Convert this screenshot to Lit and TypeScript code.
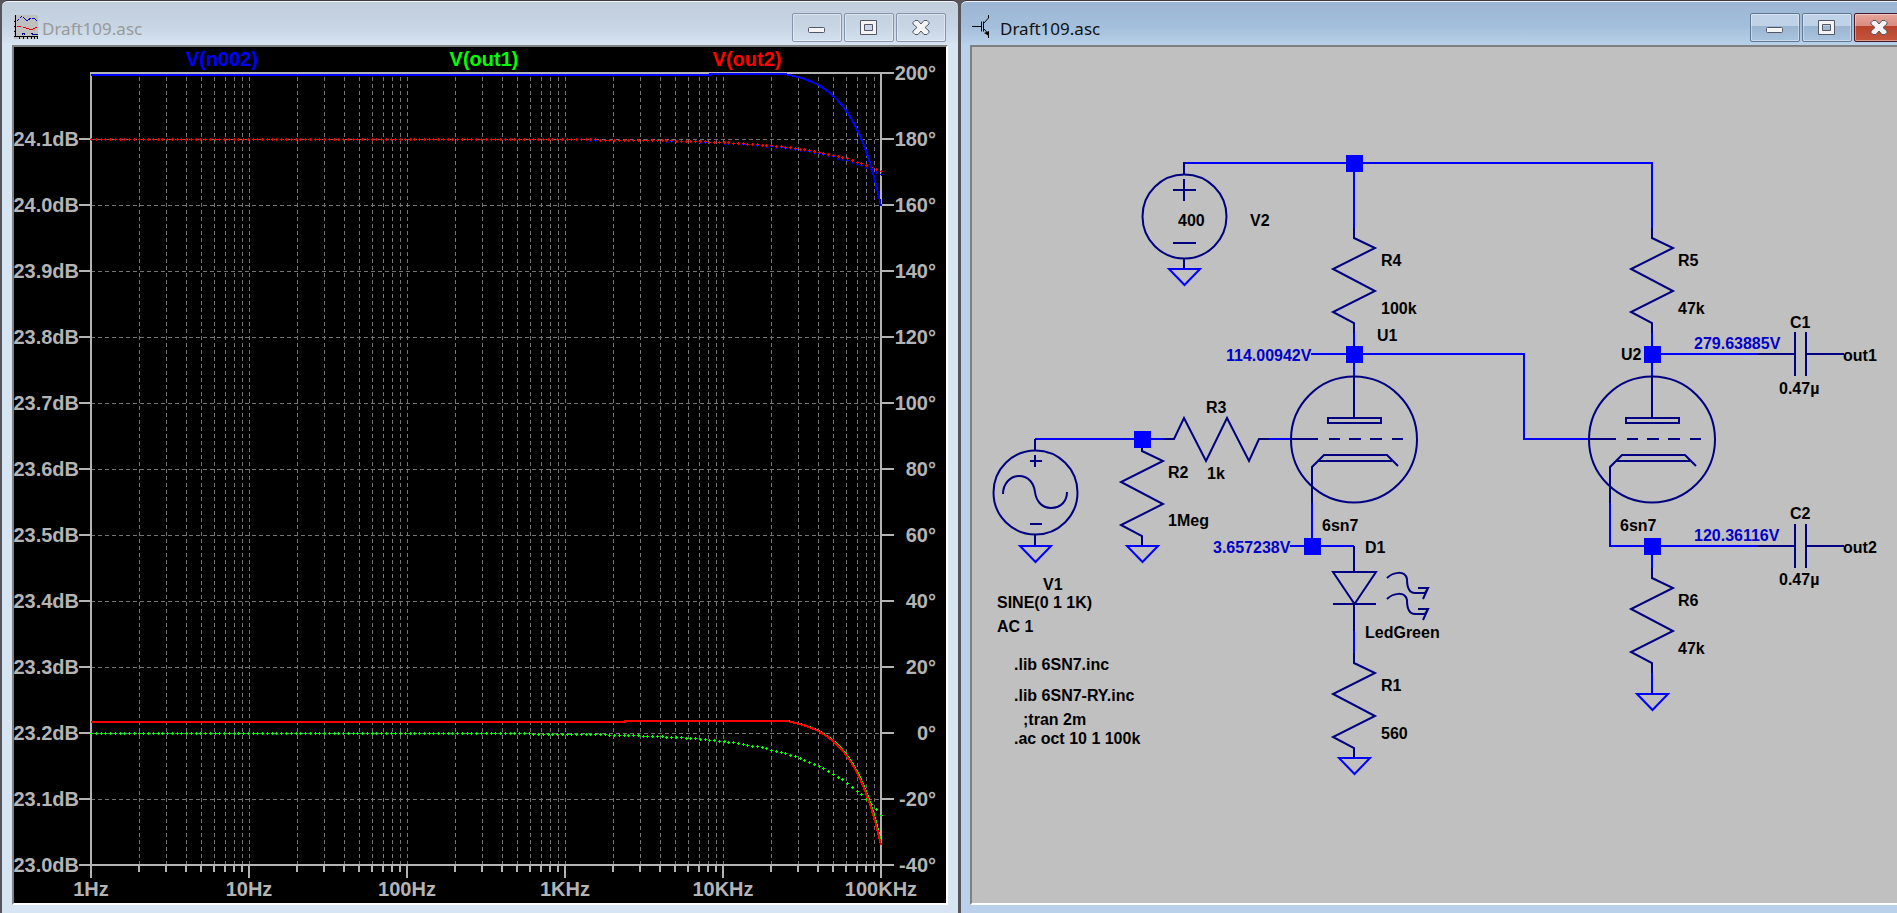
import { LitElement, html, svg, css } from "lit";
import { customElement, property } from "lit/decorators.js";

type Point = [number, number];

/* ---------- caption button glyphs ---------- */

const minimiseGlyph = html`<svg width="20" height="18" viewBox="0 0 20 18" aria-hidden="true">
  <rect x="1.500" y="8.500" width="16" height="5" rx="1" fill="#f4f4f4" stroke="#535666" />
</svg>`;

const maximiseGlyph = html`<svg width="20" height="18" viewBox="0 0 20 18" aria-hidden="true">
  <path fill-rule="evenodd" fill="#f4f4f4" stroke="#535666"
    d="M1.500 1.500H17.500V15.500H1.500ZM5.500 5.500V11.500H13.500V5.500Z" />
</svg>`;

const closeGlyph = html`<svg width="20" height="18" viewBox="0 0 20 18" aria-hidden="true">
  <path fill="#f4f4f4" stroke="#535666" stroke-linejoin="round"
    d="M2 3.500L4 1.500H7L10 5L13 1.500H16L18 3.500V5L14 8.500L18 12V13.500L16 15.500H13L10 12L7 15.500H4L2 13.500V12L6 8.500L2 5Z" />
</svg>`;

const plotIcon = html`<svg width="24" height="24" viewBox="0 0 24 24" aria-hidden="true" shape-rendering="crispEdges">
  <rect width="24" height="24" fill="#c0c0c0" />
  <path d="M1.500 0V22M0 21.500H24M0 6.500H1M0 11.500H1M0 16.500H1M5.500 22V24M9.500 22V24M13.500 22V24M17.500 22V24M20.500 22V24M23.500 22V24"
    fill="none" stroke="#000" />
  <path d="M3 6L8 1L13 6L17 3H20L24 7" fill="none" stroke="#0000c8" stroke-dasharray="3 1" />
  <path d="M3 11.500H7M9 12.500H12M12 13.500H15M15 14.500H19M19 13.500H21M21 12.500H23" fill="none" stroke="#f00" />
  <path d="M8.500 20V18.500H10.500V20M17 18.500H18.500V19.500H24" fill="none" stroke="#000080" />
</svg>`;

const schematicIcon = html`<svg width="20" height="24" viewBox="0 0 20 24" aria-hidden="true">
  <path d="M0 11.500H9M9.500 6.500V16.500M11.500 6.500V16.500M12 8L16.500 3V0M12 14L16.500 19V23" fill="none" stroke="#000" />
  <path d="M17 16V21L12 18Z" fill="#000" />
</svg>`;

/* ---------- framed desktop window ---------- */

@customElement("mdi-window")
export class MdiWindow extends LitElement {
  @property() heading = "";
  @property({ type: Boolean, reflect: true }) active = false;

  static styles = css`
    :host {
      --top: #c1cddb;
      --mid: #c7d5e4;
      --body: #d7e4f2;
      --caption: #999;
      --edge: #8593ab;
      --face: transparent;
      display: flex;
      flex-direction: column;
      box-sizing: border-box;
      padding: 0 10px 8px;
      border-top: 1px solid #3c3a40;
      border-radius: 6px 6px 0 0;
      box-shadow: inset 0 1px #f2f6fa;
      background: linear-gradient(var(--top) 1px, var(--mid) 26px, var(--body) 44px);
      font-family: "Noto Sans", "Open Sans", sans-serif;
    }
    :host([active]) {
      --top: #9bb5d2;
      --mid: #a4bfdb;
      --body: #b9d1ea;
      --caption: #111;
      --edge: #5f7792;
      --face: linear-gradient(#bfd2e8 43%, #9bb4cf 43%, #a9c4df);
    }
    header {
      display: flex;
      align-items: flex-start;
      height: 44px;
      flex: none;
    }
    .icon {
      display: flex;
      margin-top: 14px;
      min-width: 24px;
      padding-left: 2px;
    }
    h1 {
      flex: 1;
      margin: 14px 0 0 4px;
      font-size: 17px;
      line-height: 27px;
      font-weight: 400;
      color: var(--caption);
    }
    .buttons {
      display: flex;
      gap: 2px;
      margin: 12px 2px 0 0;
    }
    button {
      display: flex;
      align-items: center;
      justify-content: center;
      width: 50px;
      height: 29px;
      padding: 0;
      border: 1px solid var(--edge);
      border-radius: 2px;
      box-shadow: inset 0 0 0 1px rgb(255 255 255 / 40%);
      background: var(--face);
    }
    :host([active]) .close {
      border-color: #43192a;
      background: linear-gradient(#e5a59b, #da8d80 43%, #b7412b 43%, #c4563c);
    }
    .client {
      flex: 1;
      min-height: 0;
      display: grid;
      grid-template: minmax(0, 1fr) / minmax(0, 1fr);
      border: 2px solid #808080;
      border-right-color: #fff;
      border-bottom-color: #fff;
    }
  `;

  render() {
    return html`
      <header>
        <span class="icon"><slot name="icon"></slot></span>
        <h1>${this.heading}</h1>
        <div class="buttons">
          <button aria-label="Minimize">${minimiseGlyph}</button>
          <button aria-label="Maximize">${maximiseGlyph}</button>
          <button class="close" aria-label="Close">${closeGlyph}</button>
        </div>
      </header>
      <div class="client"><slot></slot></div>
    `;
  }
}

/* ---------- frequency response plot ---------- */

const LEFT = 91;
const TOP = 73;
const DECADE = 158;
const ROW = 66;
const RIGHT = LEFT + 5 * DECADE;
const BOTTOM = TOP + 12 * ROW;

const xOf = (hz: number) => LEFT + DECADE * Math.log10(hz);

@customElement("bode-plot")
export class BodePlot extends LitElement {
  static styles = css`
    :host {
      display: block;
      background: #000;
    }
    svg {
      display: block;
      width: 100%;
      height: 100%;
      font: bold 20px "Liberation Sans", Arial, sans-serif;
    }
    .grid {
      stroke: #747474;
      stroke-width: 1;
      stroke-dasharray: 4 3;
      fill: none;
    }
    .axis {
      stroke: #b4b4b4;
      stroke-width: 2;
      fill: none;
    }
    .label {
      fill: #b4b4b4;
    }
    .end {
      text-anchor: end;
    }
    .mid {
      text-anchor: middle;
    }
    .trace {
      fill: none;
      stroke-width: 2;
    }
  `;

  private minorX(): number[] {
    const xs: number[] = [];
    for (let d = 0; d < 5; d++) {
      for (let m = 2; m < 10; m++) xs.push(Math.round(xOf(m * 10 ** d)));
    }
    return xs;
  }

  private magnitude(flat: number, peak: number, step: number, fall: number) {
    const pts: Point[] = [[LEFT, flat], [step, flat], [step, peak]];
    for (let x = 761; x <= RIGHT; x += 3) {
      const ratio = 10 ** ((x - RIGHT) / DECADE);
      pts.push([x, peak + Math.max(0, fall * ratio ** 2.4 - 6 * (1 - ratio))]);
    }
    return pts.map((p) => p.join()).join(" ");
  }

  /* One plus-shaped marker for each of the ten points per octave. */
  private phase(base: number, fall: number) {
    let d = "";
    for (let i = 0; i <= 166; i++) {
      const x = Math.round(LEFT + (i * DECADE) / 33.22);
      const y = Math.round(base + fall * 10 ** ((x - RIGHT) / DECADE));
      d += `M${x - 1} ${y + 0.5}h3M${x + 0.5} ${y - 1}v3`;
    }
    return d;
  }

  render() {
    const minor = this.minorX();
    const decades = [0, 1, 2, 3, 4, 5].map((d) => LEFT + d * DECADE);
    const rows = Array.from({ length: 13 }, (_, i) => TOP + i * ROW);
    const names = ["1Hz", "10Hz", "100Hz", "1KHz", "10KHz", "100KHz"];
    const gridPath =
      [...minor, ...decades.slice(1, 5)].map((x) => `M${x + 0.5} ${TOP + 4}V${BOTTOM}`).join("") +
      rows.slice(1, 12).map((y) => `M${LEFT} ${y + 0.5}H${RIGHT}`).join("");
    const ticks =
      minor.map((x) => `M${x} ${BOTTOM}v7`).join("") +
      decades.map((x) => `M${x} ${BOTTOM}v13`).join("") +
      rows.map((y, i) => (i ? `M79 ${y}H${LEFT}` : "") + `M${RIGHT} ${y}h13`).join("");

    return html`<svg viewBox="14 47 932 856" preserveAspectRatio="xMinYMin meet" role="img" aria-label="AC analysis">
      <path class="grid" shape-rendering="crispEdges" d=${gridPath} />
      <rect class="axis" x=${LEFT} y=${TOP} width=${RIGHT - LEFT} height=${BOTTOM - TOP} />
      <path class="axis" d=${ticks} />
      ${rows.map((y, i) => svg`
        ${i ? svg`<text class="label end" x="79" y=${y + 7}>${(24.2 - i / 10).toFixed(1)}dB</text>` : ""}
        <text class="label end" x="936" y=${y + 7}>${200 - i * 20}°</text>`)}
      ${decades.map((x, i) => svg`<text class="label mid" x=${x} y="896">${names[i]}</text>`)}
      <text class="mid" x="222" y="66" fill="#00f">V(n002)</text>
      <text class="mid" x="484" y="66" fill="#0f0">V(out1)</text>
      <text class="mid" x="747" y="66" fill="#f00">V(out2)</text>
      <g shape-rendering="crispEdges">
        <path d=${this.phase(139, 35)} stroke="#00f" />
        <path d=${this.phase(139, 32)} stroke="#f00" />
        <path d=${this.phase(733, 82)} stroke="#0f0" />
        <polyline class="trace" stroke="#00f" points=${this.magnitude(75, 74, 710, 132)} />
        <polyline class="trace" stroke="#0f0" points=${this.magnitude(722, 721, 625, 121)} />
        <polyline class="trace" stroke="#f00" points=${this.magnitude(722, 721, 625, 124)} />
      </g>
    </svg>`;
  }
}

/* ---------- circuit schematic ---------- */

const resistor = (x: number, y: number) => svg`<path class="part"
  d="M${x} ${y}v10l21 10l-42 21l42 22l-42 21l21 11v10" />`;

const ground = (x: number, y: number) => svg`<path class="wire" d="M${x - 15} ${y}h31l-15.500 16z" />`;

const junction = (x: number, y: number) => svg`<rect class="node" x=${x - 8} y=${y - 8} width="17" height="17" />`;

const capacitor = (y: number) => svg`<path class="part"
  d="M1758 ${y}H1795M1806 ${y}H1844M1795 ${y - 22}v44M1806 ${y - 22}v44" />`;

const triode = (x: number) => svg`
  <circle class="part" cx=${x} cy="439.500" r="63" />
  <path class="part" d="M${x} 377V418M${x - 26} 418h53v5h-53zM${x - 63} 439h27M${x - 25} 439h11M${x - 5} 439h12M${x + 16} 439h12M${x + 38} 439h11
    M${x - 42} 503V467l12 -12h63l11 11M${x - 36} 461h74" />`;

const led = (y: number) => svg`<path class="part"
  d="M1387 ${y + 6}C1393 ${y} 1405 ${y - 2} 1407 ${y + 7}C1407 ${y + 15} 1409 ${y + 21} 1415 ${y + 21}H1425L1428 ${y + 16}H1418M1428 ${y + 16}L1423 ${y + 27}" />`;

const captions: [number, number, string][] = [
  [1178, 226, "400"], [1250, 226, "V2"],
  [1381, 266, "R4"], [1381, 314, "100k"], [1377, 341, "U1"],
  [1678, 266, "R5"], [1678, 314, "47k"], [1621, 360, "U2"],
  [1790, 328, "C1"], [1779, 394, "0.47µ"], [1843, 361, "out1"],
  [1790, 519, "C2"], [1779, 585, "0.47µ"], [1843, 553, "out2"],
  [1206, 413, "R3"], [1207, 479, "1k"],
  [1168, 478, "R2"], [1168, 526, "1Meg"],
  [1322, 531, "6sn7"], [1620, 531, "6sn7"],
  [1365, 553, "D1"], [1365, 638, "LedGreen"],
  [1381, 691, "R1"], [1381, 739, "560"],
  [1678, 606, "R6"], [1678, 654, "47k"],
  [1043, 590, "V1"], [997, 608, "SINE(0 1 1K)"], [997, 632, "AC 1"],
  [1014, 670, ".lib 6SN7.inc"], [1014, 701, ".lib 6SN7-RY.inc"],
  [1023, 725, ";tran 2m"], [1014, 744, ".ac oct 10 1 100k"],
];

const voltages: [number, number, string][] = [
  [1226, 361, "114.00942V"], [1213, 553, "3.657238V"],
  [1694, 349, "279.63885V"], [1694, 541, "120.36116V"],
];

@customElement("circuit-schematic")
export class CircuitSchematic extends LitElement {
  static styles = css`
    :host {
      display: block;
      overflow: hidden;
      background: #c0c0c0;
    }
    svg {
      display: block;
      width: 100%;
      height: 100%;
      font: bold 16px "Liberation Sans", Arial, sans-serif;
    }
    .wire {
      fill: none;
      stroke: #00f;
      stroke-width: 2;
    }
    .part {
      fill: none;
      stroke: #000080;
      stroke-width: 2;
    }
    .node {
      fill: #00f;
    }
    .voltage {
      fill: #0000c8;
    }
  `;

  render() {
    return html`<svg role="img" aria-label="Circuit schematic">
      <g transform="translate(-972 -47)">
        <path class="wire" d="M1184 163H1652V228M1354 163V228M1354 333V377M1311 354H1524V439H1590
          M1652 333V377M1652 354H1758M1610 503V546H1758M1652 546V568M1652 673V694
          M1035 439H1164M1269 439H1291M1312 503V546M1290 546H1354M1354 631V653" />
        <circle class="part" cx="1184.500" cy="216.500" r="42" />
        <path class="part" d="M1184 162V174M1184 259V269M1173 190h23M1184 179v22M1173 243h23" />
        <circle class="part" cx="1035.500" cy="492.500" r="42" />
        <path class="part" d="M1035 439V450M1035 535V546M1030 461h12M1035 455v12M1030 524h12
          M1003 494C1003 484 1010 476 1019 476C1029 476 1034 484 1035 492C1036 500 1041 508 1051 508C1062 508 1067 500 1067 492" />
        ${resistor(1354, 228)} ${resistor(1652, 228)} ${resistor(1142, 441)}
        ${resistor(1354, 653)} ${resistor(1652, 568)}
        <path class="part" d="M1164 439h10l10 -21l22 43l21 -43l22 43l10 -22h10" />
        ${triode(1354)} ${triode(1652)}
        ${capacitor(354)} ${capacitor(546)}
        <path class="part" d="M1354 546V572M1333 572h43l-21.500 32zM1333 604h43M1354 604V631" />
        ${led(572)} ${led(593)}
        ${ground(1184, 269)} ${ground(1035, 546)} ${ground(1142, 546)}
        ${ground(1354, 758)} ${ground(1652, 694)}
        ${junction(1354, 163)} ${junction(1354, 354)} ${junction(1652, 354)}
        ${junction(1142, 439)} ${junction(1312, 546)} ${junction(1652, 546)}
        ${captions.map(([x, y, t]) => svg`<text x=${x} y=${y}>${t}</text>`)}
        ${voltages.map(([x, y, t]) => svg`<text class="voltage" x=${x} y=${y}>${t}</text>`)}
      </g>
    </svg>`;
  }
}

/* ---------- desktop with the two tiled windows ---------- */

@customElement("app-root")
export class AppRoot extends LitElement {
  static styles = css`
    :host {
      display: grid;
      grid-template: minmax(0, 1fr) / minmax(0, 960fr) minmax(0, 937fr);
      height: 100vh;
      overflow: hidden;
      background: #55555b;
    }
    .pane {
      display: grid;
      grid-template: minmax(0, 1fr) / minmax(0, 1fr);
    }
    .left {
      padding: 0 2px;
    }
    .right {
      padding-left: 1px;
    }
    .right mdi-window {
      padding-left: 9px;
      margin-right: -19px;
    }
  `;

  render() {
    return html`
      <section class="pane left">
        <mdi-window heading="Draft109.asc">
          <span slot="icon">${plotIcon}</span>
          <bode-plot></bode-plot>
        </mdi-window>
      </section>
      <section class="pane right">
        <mdi-window heading="Draft109.asc" active>
          <span slot="icon">${schematicIcon}</span>
          <circuit-schematic></circuit-schematic>
        </mdi-window>
      </section>
    `;
  }
}
